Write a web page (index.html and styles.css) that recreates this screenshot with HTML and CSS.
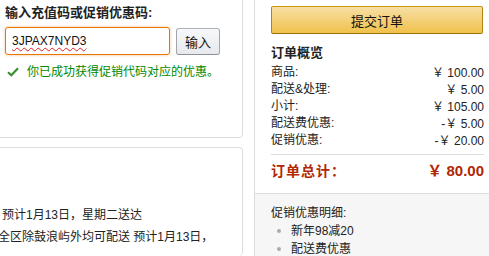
FILE: index.html
```html
<!DOCTYPE html>
<html lang="zh-CN">
<head>
<meta charset="utf-8">
<link rel="stylesheet" href="styles.css">
</head>
<body>
<div class="page">
  <div class="left">
    <div class="box box-promo">
      <div class="promo-title">输入充值码或促销优惠码:</div>
      <div class="promo-form">
        <div class="code-input"><span class="code">3JPAX7NYD3</span></div>
        <button class="btn-apply">输入</button>
      </div>
      <div class="promo-success">
        <svg class="check" width="12" height="10" viewBox="0 0 12 10"><path d="M1 5.2 L4.3 8.3 L11 1.3" fill="none" stroke="#3a8f2c" stroke-width="2.2"/></svg>
        <span>你已成功获得促销代码对应的优惠。</span>
      </div>
    </div>
    <div class="box box-ship">
      <div class="ship-line ship-first">预计1月13日，星期二送达</div>
      <div class="ship-line">全区除鼓浪屿外均可配送 预计1月13日，</div>
    </div>
  </div>
  <div class="right">
    <div class="summary">
      <button class="btn-submit">提交订单</button>
      <div class="summary-title">订单概览</div>
      <div class="rows">
        <div class="row"><span>商品:</span><span><span class="yen">￥</span> 100.00</span></div>
        <div class="row"><span>配送&amp;处理:</span><span><span class="yen">￥</span> 5.00</span></div>
        <div class="row"><span>小计:</span><span><span class="yen">￥</span> 105.00</span></div>
        <div class="row"><span>配送费优惠:</span><span>-<span class="yen">￥</span> 5.00</span></div>
        <div class="row"><span>促销优惠:</span><span>-<span class="yen">￥</span> 20.00</span></div>
      </div>
      <div class="total"><span class="total-label">订单总计：</span><span class="total-value">￥ 80.00</span></div>
    </div>
    <div class="promo-detail">
      <div class="detail-title">促销优惠明细:</div>
      <ul class="detail-list">
        <li>新年98减20</li>
        <li>配送费优惠</li>
      </ul>
    </div>
  </div>
</div>
</body>
</html>
```

FILE: styles.css
```css
html, body {
  margin: 0;
  padding: 0;
  background: #fff;
}
body {
  width: 489px;
  height: 256px;
  overflow: hidden;
  font-family: "Liberation Sans", "Noto Sans CJK SC", sans-serif;
  font-size: 12px;
  color: #222;
}
.page {
  display: flex;
  align-items: stretch;
  height: 256px;
}
.left {
  flex: none;
  width: 273px;
  margin-left: -30px;
  margin-right: 11px;
  display: flex;
  flex-direction: column;
}
.box {
  box-sizing: border-box;
  border: 1px solid #ddd;
  border-radius: 4px;
}
.box-promo {
  height: 148px;
  margin-top: -10px;
  padding: 13px 0 0 34px;
}
.promo-title {
  font-size: 13px;
  font-weight: bold;
  line-height: 18px;
  color: #222;
}
.promo-form {
  display: flex;
  align-items: center;
  gap: 6px;
  margin-top: 5px;
}
.code-input {
  box-sizing: border-box;
  width: 165px;
  height: 28px;
  border: 1px solid #e77600;
  border-radius: 3px;
  box-shadow: 0 0 3px rgba(228, 121, 17, 0.5);
  padding: 0 6px;
  display: flex;
  align-items: center;
  font-size: 12px;
  color: #111;
}
.code {
  text-decoration: underline wavy #e02020;
  text-decoration-thickness: 1px;
  text-underline-offset: 2px;
}
.btn-apply {
  box-sizing: border-box;
  width: 44px;
  height: 27px;
  margin: 0;
  padding: 0;
  border: 1px solid #adb1b8;
  border-color: #adb1b8 #a2a6ac #8d9096;
  border-radius: 3px;
  background: linear-gradient(to bottom, #f7f8fa, #e7e9ec);
  font-family: "Liberation Sans", "Noto Sans CJK SC", sans-serif;
  font-size: 13px;
  color: #111;
}
.promo-success {
  display: flex;
  align-items: center;
  gap: 8px;
  margin-top: 8px;
  margin-left: 2px;
  line-height: 18px;
  color: #008a00;
  font-size: 12px;
}
.check {
  flex: none;
}
.box-ship {
  flex: 1;
  margin-top: 9px;
  padding: 56px 0 0 27px;
  border-bottom: none;
}
.ship-line {
  line-height: 22px;
  white-space: nowrap;
  color: #222;
}
.ship-first {
  margin-left: 4px;
}
.right {
  flex: none;
  width: 245px;
  border-left: 1px solid #ddd;
  display: flex;
  flex-direction: column;
}
.summary {
  padding: 6px 16px 12px 16px;
}
.btn-submit {
  box-sizing: border-box;
  display: block;
  width: 212px;
  height: 28px;
  margin: 0;
  padding: 0;
  border: 1px solid #a88734;
  border-color: #c89411 #b0820f #99710d;
  border-radius: 2px;
  background: linear-gradient(to bottom, #f7dfa5, #f0c14b);
  font-family: "Liberation Sans", "Noto Sans CJK SC", sans-serif;
  font-size: 13px;
  color: #111;
}
.summary-title {
  margin-top: 10px;
  font-size: 13px;
  font-weight: bold;
  line-height: 18px;
  color: #222;
}
.rows {
  margin-top: 2px;
  padding-bottom: 5px;
  border-bottom: 1px solid #ddd;
}
.row {
  display: flex;
  justify-content: space-between;
  line-height: 16px;
}
.yen {
  font-family: "Noto Sans CJK SC", sans-serif;
}
.total {
  margin-top: 6px;
  display: flex;
  justify-content: space-between;
  align-items: center;
  line-height: 20px;
  color: #b12704;
  font-weight: bold;
}
.total-label {
  font-size: 14px;
  letter-spacing: 1px;
}
.total-value {
  font-size: 15px;
}
.promo-detail {
  flex: 1;
  background: #f6f6f6;
  border-top: 1px solid #ddd;
  padding: 11px 16px 0 16px;
}
.detail-title {
  line-height: 17px;
}
.detail-list {
  list-style: none;
  margin: 0;
  padding: 0;
}
.detail-list li {
  display: flex;
  align-items: center;
  line-height: 18px;
}
.detail-list li::before {
  content: "";
  display: inline-block;
  width: 4px;
  height: 4px;
  border-radius: 50%;
  background: #aaa;
  margin-left: 6px;
  margin-right: 10px;
}
```
